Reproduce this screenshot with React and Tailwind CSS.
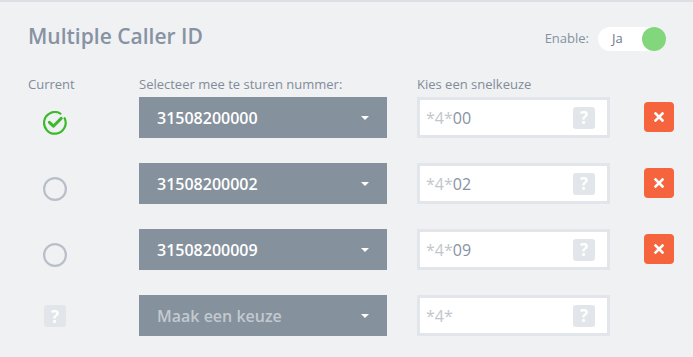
import React from "react";

const rows = [
  { state: "current", number: "31508200000", code: "00" },
  { state: "radio", number: "31508200002", code: "02" },
  { state: "radio", number: "31508200009", code: "09" },
  { state: "empty", number: null, code: "" },
];

function CheckIcon() {
  return (
    <svg width="24" height="24" viewBox="0 0 24 24" fill="none">
      <path d="M21.6 7.2 A10.8 10.8 0 1 1 17.4 2.6" stroke="#3cba2c" strokeWidth="2.2" strokeLinecap="round" />
      <path d="M6.4 11.4 L10.4 15.2 L18.2 7.4" stroke="#3cba2c" strokeWidth="3" strokeLinecap="round" strokeLinejoin="round" />
    </svg>
  );
}

function RadioIcon() {
  return (
    <svg width="24" height="24" viewBox="0 0 24 24" fill="none">
      <circle cx="12" cy="12" r="10.9" stroke="#b9bfc8" strokeWidth="2.2" />
    </svg>
  );
}

function QBox({ className = "" }) {
  return (
    <div className={"shrink-0 w-[22px] h-[22px] rounded-[3px] bg-[#e2e5e9] flex items-center justify-center text-white font-bold text-[17px] leading-none " + className}>
      ?
    </div>
  );
}

function Caret() {
  return (
    <svg width="8" height="4" viewBox="0 0 8 4">
      <path d="M0 0 L8 0 L4 4 Z" fill="#ffffff" />
    </svg>
  );
}

function XIcon() {
  return (
    <svg width="10" height="10" viewBox="0 0 10 10">
      <path d="M1.5 1.5 L8.5 8.5 M8.5 1.5 L1.5 8.5" stroke="#ffffff" strokeWidth="2.6" strokeLinecap="square" />
    </svg>
  );
}

export default function App() {
  return (
    <div className="w-[693px] h-[357px] bg-[#f0f1f3] border-t-2 border-[#dcdfe3] font-['Open_Sans',sans-serif] overflow-hidden">
      <div className="pl-[28px] pr-[27px] flex justify-between items-start h-[74px]">
        <h1 className="pt-[19px] text-[21px] leading-[30px] font-semibold text-[#8792a3]">Multiple Caller ID</h1>
        <div className="pt-[25px] flex items-center gap-[9px]">
          <span className="text-[13px] text-[#8591a1]">Enable:</span>
          <div className="w-[68px] h-[24px] rounded-full bg-white flex items-center justify-between pl-[14px]">
            <span className="text-[13px] text-[#6f7989]">Ja</span>
            <div className="w-[24px] h-[24px] rounded-full bg-[#82d67c]" />
          </div>
        </div>
      </div>
      <div className="pl-[28px] flex text-[13px] leading-[17px] text-[#818c9a]">
        <div className="w-[54px] shrink-0">Current</div>
        <div className="ml-[57px] w-[248px] shrink-0">Selecteer mee te sturen nummer:</div>
        <div className="ml-[30px] shrink-0">Kies een snelkeuze</div>
      </div>
      <div className="pl-[28px] mt-[4px] flex flex-col gap-[25px]">
        {rows.map((r, i) => (
          <div key={i} className="flex items-start h-[41px]">
            <div className="w-[54px] shrink-0 flex justify-center">
              {r.state === "current" && <div className="mt-[14px]"><CheckIcon /></div>}
              {r.state === "radio" && <div className="mt-[14px]"><RadioIcon /></div>}
              {r.state === "empty" && <QBox className="mt-[10px]" />}
            </div>
            <div className="ml-[57px] shrink-0 w-[248px] h-[41px] bg-[#85919d] flex items-center justify-between pl-[18px] pr-[18px]">
              <span className={"text-[16px] font-semibold " + (r.number ? "text-white" : "text-[#c3c9d0]")}>
                {r.number || "Maak een keuze"}
              </span>
              <Caret />
            </div>
            <div className="ml-[30px] shrink-0 w-[193px] h-[41px] border-[3px] border-[#e2e5e9] bg-white flex items-center justify-between pl-[6px] pr-[12px]">
              <span className="text-[16px]">
                <span className="text-[#c2c6cc]">*4*</span>
                <span className="text-[#8792a3]">{r.code}</span>
              </span>
              <QBox />
            </div>
            {r.number && (
              <div className="ml-[34px] shrink-0 mt-[5px] w-[30px] h-[30px] rounded-[4px] bg-[#f5643c] flex items-center justify-center">
                <XIcon />
              </div>
            )}
          </div>
        ))}
      </div>
    </div>
  );
}
